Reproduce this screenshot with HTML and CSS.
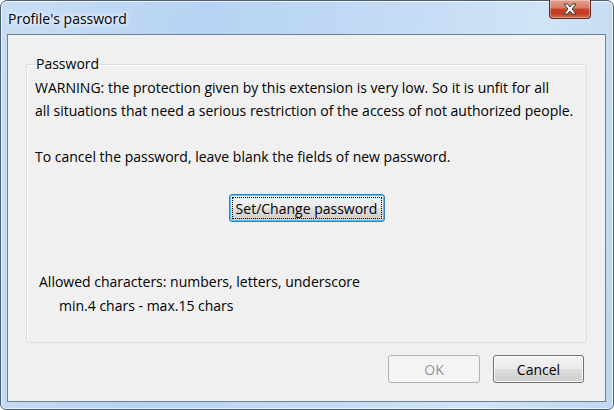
FILE: index.html
```html
<!DOCTYPE html>
<html>
<head>
<meta charset="utf-8">
<link rel="stylesheet" href="styles.css">
</head>
<body>
<div class="window">
  <div class="titlebar">
    <span class="title">Profile's password</span>
    <div class="close">
      <svg width="20" height="14" viewBox="0 0 20 14">
        <path d="M4 2 L7.5 2 L10 5 L12.5 2 L16 2 L12 7 L16 12 L12.5 12 L10 9 L7.5 12 L4 12 L8 7 Z" fill="#fff" stroke="#3b3b3b" stroke-width="1" stroke-linejoin="round"/>
      </svg>
    </div>
  </div>
  <div class="client">
    <fieldset class="group">
      <legend>Password</legend>
      <p class="text">WARNING: the protection given by this extension is very low. So it is unfit for all<br>all situations that need a serious restriction of the access of not authorized people.</p>
      <p class="text gap">To cancel the password, leave blank the fields of new password.</p>
      <div class="center">
        <button class="btn focus"><span class="focusrect">Set/Change password</span></button>
      </div>
      <p class="info first">Allowed characters: numbers, letters, underscore</p>
      <p class="info indent">min.4 chars - max.15 chars</p>
    </fieldset>
    <div class="actions">
      <button class="btn disabled ok">OK</button>
      <button class="btn cancel">Cancel</button>
    </div>
  </div>
</div>
</body>
</html>
```
FILE: styles.css
```css
html, body {
  margin: 0;
  padding: 0;
  width: 614px;
  height: 410px;
  overflow: hidden;
  background: #ffffff;
  font-family: "Open Sans", "Noto Sans", sans-serif;
}
.window {
  box-sizing: border-box;
  width: 614px;
  height: 410px;
  border: 1px solid #4d5f73;
  border-radius: 7px 7px 6px 6px;
  background: linear-gradient(100deg, #c9def3 0%, #b6d3f3 30%, #c4dcf5 60%, #d1e4f7 80%, #bcd6f1 100%);
  box-shadow: inset 0 0 0 1px rgba(255,255,255,0.7);
  display: flex;
  flex-direction: column;
}
.titlebar {
  height: 33px;
  display: flex;
  justify-content: space-between;
  align-items: flex-start;
  padding-left: 7px;
  padding-right: 22px;
}
.title {
  font-size: 14px;
  line-height: 16px;
  margin-top: 10px;
  color: #000;
  text-shadow: 0 0 8px #ffffff, 0 0 4px #ffffff;
}
.close {
  width: 42px;
  height: 19px;
  margin-top: -1px;
  box-sizing: border-box;
  border: 1px solid #5b2a22;
  border-top: none;
  border-radius: 0 0 4px 4px;
  background: linear-gradient(#e0a08f 0%, #d77b66 45%, #c7442c 50%, #c23d24 75%, #d56a4f 100%);
  box-shadow: inset 0 0 0 1px rgba(255,255,255,0.35);
  display: flex;
  align-items: center;
  justify-content: center;
}
.client {
  flex: 1;
  margin: 0 7px 7px 6px;
  border: 1px solid #6f8090;
  background: #f0f0f0;
  display: flex;
  flex-direction: column;
}
.group {
  margin: 21px 18px 0 18px;
  padding: 4px 8px 24px 8px;
  border: 1px solid #d5dfe5;
  border-radius: 3px;
  box-shadow: 1px 1px 0 #ffffff inset;
  min-inline-size: auto;
}
.group legend {
  font-size: 14px;
  line-height: 16px;
  padding: 0 1px;
  margin-left: 0;
  color: #000;
}
.text {
  margin: 0;
  font-size: 14px;
  line-height: 23px;
  color: #000;
  white-space: nowrap;
}
.text.gap {
  margin-top: 23px;
}
.center {
  display: flex;
  justify-content: center;
  margin-top: 26px;
}
.btn {
  box-sizing: border-box;
  height: 28px;
  font-family: "Open Sans", "Noto Sans", sans-serif;
  font-size: 14px;
  color: #000;
  border: 1px solid #707070;
  border-radius: 3px;
  background: linear-gradient(#f2f2f2 0%, #ebebeb 49%, #dddddd 51%, #cfcfcf 100%);
  box-shadow: inset 0 0 0 1px #fcfcfc;
  padding: 0;
}
.btn.focus {
  width: 156px;
  border-color: #3c7fb1;
  box-shadow: inset 0 0 0 1px #48c6f9;
  padding: 2px;
}
.focusrect {
  display: block;
  height: 22px;
  line-height: 21px;
  border: 1px dotted #000;
  box-sizing: border-box;
}
.info {
  margin: 0;
  font-size: 14px;
  line-height: 24px;
  color: #000;
  padding-left: 4px;
}
.info.first {
  margin-top: 48px;
}
.info.indent {
  padding-left: 24px;
}
.actions {
  display: flex;
  justify-content: flex-end;
  gap: 13px;
  margin: 12px 21px 0 0;
}
.btn.ok {
  width: 92px;
}
.btn.cancel {
  width: 91px;
}
.btn.disabled {
  color: #8a939c;
  border-color: #adb2b5;
  background: #f4f4f4;
  box-shadow: none;
}
```
